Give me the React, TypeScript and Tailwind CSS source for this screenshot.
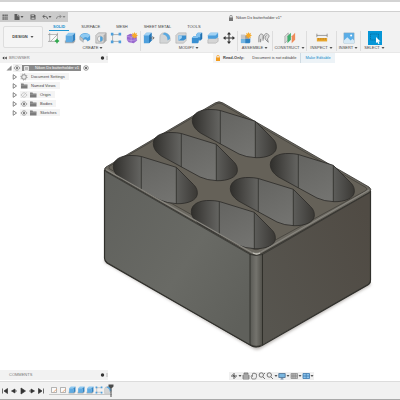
import React, { useState } from 'react';

const tabs = ['SOLID', 'SURFACE', 'MESH', 'SHEET METAL', 'TOOLS'];

const treeItems = [
  { name: 'Document Settings', icon: 'gear', eye: '' },
  { name: 'Named Views', icon: 'folder', eye: '' },
  { name: 'Origin', icon: 'folder', eye: 'off' },
  { name: 'Bodies', icon: 'folder', eye: 'on' },
  { name: 'Sketches', icon: 'folder', eye: 'on' },
];

const groups = [
  { name: 'CREATE', width: 'w-[95px]', icons: ['sketch', 'extrude', 'revolve', 'hole', 'pattern', 'form'] },
  { name: 'MODIFY', width: 'w-[97px]', icons: ['press', 'fillet', 'shell', 'combine', 'split', 'move'] },
  { name: 'ASSEMBLE', width: 'w-[35px]', icons: ['component', 'joint'] },
  { name: 'CONSTRUCT', width: 'w-[34px]', icons: ['plane'] },
  { name: 'INSPECT', width: 'w-[30px]', icons: ['measure'] },
  { name: 'INSERT', width: 'w-[24px]', icons: ['image'] },
  { name: 'SELECT', width: 'w-[27px]', icons: ['select'] },
];

// every tool drawing uses a 14 x 14 box
const toolDrawings: Record<string, React.ReactNode> = {
  sketch: (
    <>
      <path d="M2 3h9v8H2z" fill="#fafafa" stroke="#777" strokeWidth=".6" />
      <path d="M3 11 11 3M2 1v2M11 1v2M0 3h2M0 11h2" stroke="#777" strokeWidth=".6" />
      <path d="M10.5 8v5M8 10.5h5" stroke="#27a745" strokeWidth="1.7" />
    </>
  ),
  extrude: (
    <>
      <path d="M1 10h10l2-2v3l-2 2H1z" fill="#aaa" />
      <path d="M2 4 5 1h8l-3 3z" fill="#8fcaf2" />
      <path d="M2 4h8v8H2z" fill="#5fabe2" />
      <path d="m10 4 3-3v8l-3 3z" fill="#2f83c3" />
    </>
  ),
  revolve: (
    <>
      <path d="M1 5c2-5 10-5 12-1v5l-3 2C9 8 6 8 5 10L1 8z" fill="#4d9fdc" />
      <path d="M1 5c3-4 9-4 12-1l-3 3C8 5 6 6 5 8z" fill="#8fcaf2" />
      <path d="m1 5 4 3v4l-4-3z" fill="#c2c4c5" stroke="#888" strokeWidth=".4" />
    </>
  ),
  hole: (
    <>
      <path d="m1 4 3-3h9v9l-3 3H1z" fill="#d8d8d8" stroke="#8a8a8a" strokeWidth=".6" />
      <path d="m10 4 3-3v9l-3 3z" fill="#aaa" />
      <circle cx="6" cy="8" r="3.2" fill="#eee" stroke="#777" strokeWidth=".5" />
      <path d="M6 5a3 3 0 0 1 0 6z" fill="#4da3dd" />
    </>
  ),
  pattern: (
    <>
      <path d="M3 3h8M3 3v8M3 11h8" stroke="#8b8b8b" strokeWidth=".7" />
      <path d="M1 1h3v3H1zM10 1h3v3h-3zM1 10h3v3H1zM10 10h3v3h-3z" fill="#4d9fdc" />
    </>
  ),
  form: (
    <>
      <path d="m1 4 4-2 7 2 1 6-4 3-6-1-2-3z" fill="#9969cf" />
      <path d="m1 5 5 1 6-2M6 6v7M1 9l5 1 7-1" stroke="#d1b5f0" strokeWidth=".6" fill="none" />
      <path d="m10 0 1 2 2-1-1 2 2 1-2 1 1 2-2-1-1 2-1-2-2 1 1-2-2-1 2-1-1-2 2 1z" fill="#f7a928" />
    </>
  ),
  press: (
    <>
      <path d="m1 4 3-3h6v9l-3 3H1z" fill="#4d9fdc" />
      <path d="m1 4 3-3h6L7 4z" fill="#9fd1f3" />
      <path d="m7 4 3-3v9l-3 3z" fill="#2776b5" />
      <path d="M8 7h5m-2-2 2 2-2 2" stroke="#555" strokeWidth=".8" fill="none" />
    </>
  ),
  fillet: (
    <>
      <path d="M1 6c0-3 2-5 5-5 4 0 7 3 7 7v2l-3 3H1z" fill="#d3d5d6" stroke="#999" strokeWidth=".5" />
      <path d="M4 3c4 0 6 3 6 7l3-2c0-4-3-7-7-7z" fill="#5ba9e0" />
    </>
  ),
  shell: (
    <>
      <path d="m1 4 3-3h9v9l-3 3H1z" fill="#d6d6d6" stroke="#999" strokeWidth=".5" />
      <path d="M4 4h9v4l-3 2H4z" fill="#3b90d0" />
      <path d="M4 4h4v3L4 10z" fill="#a3d3f4" />
    </>
  ),
  combine: (
    <>
      <path d="m1 7 2-2h3V3l2-2h5v7l-2 2H9v2l-1 1H1z" fill="#388fd1" />
      <path d="m1 7 2-2h3V3l2-2h5l-2 2v3H8v1z" fill="#83c2ef" />
      <path d="m11 3 2-2v7l-2 2z" fill="#2370ae" />
    </>
  ),
  split: (
    <>
      <path d="m1 9 3-2h9v4l-3 2H1z" fill="#d5d5d5" stroke="#999" strokeWidth=".5" />
      <path d="m1 4 3-3h9v5l-3 2H1z" fill="#4d9fdc" />
      <path d="m1 4 3-3h9l-3 3z" fill="#a3d3f4" />
    </>
  ),
  move: (
    <>
      <path d="M7 2v10M2 7h10" stroke="#333" strokeWidth="1.2" />
      <path d="m7 0 2.4 3H4.6zM7 14l2.4-3H4.6zM0 7l3-2.4v4.8zM14 7l-3-2.4v4.8z" fill="#333" />
    </>
  ),
  component: (
    <>
      <path d="M1 3h5v5H1z" fill="#c8c8c8" />
      <path d="M1 8h5v5H1z" fill="#74b6e4" />
      <path d="M6 8h5l1-1v5l-1 1H6z" fill="#2f83c3" />
      <path d="M6 4h5v4H6z" fill="#999" />
      <path d="m10 0 1 2 2-1-1 2 2 1-2 1 1 2-2-1-1 2-1-2-2 1 1-2-2-1 2-1-1-2 2 1z" fill="#f7a928" />
    </>
  ),
  joint: (
    <path d="M1 12V7c0-5 4-6 5-3v6M6 8c0-5 4-8 6-5 2 2 0 4-1 5l1 4-3-3c-1-1-1-4 1-5M3 12V8" fill="#ddd" stroke="#858585" strokeWidth="1" />
  ),
  plane: (
    <>
      <path d="m1 5 4-4v8l-4 4z" fill="#d9d9d9" stroke="#777" strokeWidth=".5" />
      <path d="m4 5 4-4v8l-4 4z" fill="#3fae6e" />
      <path d="m9 5 4-4v8l-4 4z" fill="#ee8b59" />
    </>
  ),
  measure: (
    <>
      <path d="M1 2v4M13 2v4M1 4h12" stroke="#666" strokeWidth=".7" />
      <path d="M1 7h12v4H1z" fill="#e8a52c" />
      <path d="M3 7v2M5 7v2M7 7v2M9 7v2M11 7v2" stroke="#9d6a10" strokeWidth=".5" />
    </>
  ),
  image: (
    <>
      <path d="M1 1h12v12H1z" fill="#5aaee8" stroke="#92a5b4" strokeWidth=".5" />
      <circle cx="9.5" cy="4" r="1.2" fill="#fff" />
      <path d="m1 10 4-4 4 4 2-2 2 2v3H1z" fill="#d5e9f6" />
    </>
  ),
  select: (
    <>
      <path d="M0 0h14v14H0z" fill="#0696d7" />
      <path d="M2.5 3h8v6h-8z" fill="none" stroke="#075c87" strokeWidth=".6" strokeDasharray="1.2 .7" />
      <path d="m8 6 4.5 4.5h-2l1 2-1.2.5-1-2L8 12z" fill="#fff" />
    </>
  ),
};

const holes = [
  { x: 79, y: -46 },
  { x: 40, y: -23 },
  { x: 0, y: 0 },
  { x: 157, y: -2 },
  { x: 117, y: 22 },
  { x: 78, y: 45 },
];

const holeOutline =
  'M113.3 166.5C113.3 159 122 155 132 155.500Q137 155.500 141.300 156.500L176.300 167.300L193.500 184.500C197 188 197.500 191 197.300 194C197 200 188 204 177 203.700Q167 203.300 160 200L122 179.300C116 175.500 113.300 171 113.300 166.500Z';

function Caret() {
  return (
    <svg viewBox="0 0 4 4" className="h-1 w-1 shrink-0" aria-hidden="true">
      <path d="M.5 1h3L2 3z" fill="#555" />
    </svg>
  );
}

function Eye({ off }: { off?: boolean }) {
  return (
    <svg viewBox="0 0 8 6" className="h-1.5 w-2 shrink-0" aria-hidden="true" opacity={off ? 0.45 : 0.8}>
      <path d="M1 3c2-3 4-3 6 0-2 3-4 3-6 0z" fill="#eee" stroke="#777" strokeWidth=".8" />
      <circle cx="4" cy="3" r="1.2" fill={off ? '#eee' : '#666'} />
      {off && <path d="M1.5 5.5 6.5.5" stroke="#777" strokeWidth=".6" />}
    </svg>
  );
}

function Folder() {
  return (
    <svg viewBox="0 0 8 6" className="h-1.5 w-2 shrink-0" aria-hidden="true">
      <path d="M1 .5h2.5l.5 1h3.5v4H1z" fill="#7c7c7c" />
      <path d="M1 2.2h6.5" stroke="#c4c4c4" strokeWidth=".4" />
    </svg>
  );
}

function Gear() {
  return (
    <svg viewBox="0 0 8 8" className="h-2 w-2 shrink-0" aria-hidden="true">
      <circle cx="4" cy="4" r="2.3" fill="#eee" stroke="#777" strokeWidth=".8" />
      <circle cx="4" cy="4" r="3.1" fill="none" stroke="#888" strokeWidth=".8" strokeDasharray="1 1.4" />
    </svg>
  );
}

function PanelEnd() {
  return (
    <svg viewBox="0 0 8 6" className="h-1.5 w-2 shrink-0" aria-hidden="true">
      <circle cx="2.5" cy="3" r="1.7" fill="#333" />
      <path d="M7 1v4" stroke="#aaa" strokeWidth=".8" />
    </svg>
  );
}

function QuickBar() {
  return (
    <div className="flex h-2.5 w-[68px] items-center bg-[#cbcbcb] text-[#5c5c5c]">
      <button aria-label="Data panel" className="ml-0.5 h-1.5 w-1.5">
        <svg viewBox="0 0 6 6">
          <path d="M.5.5h1.4v1.4H.5zM2.4.5h1.4v1.4H2.4zM4.3.5h1.4v1.4H4.3zM.5 2.4h1.4v1.4H.5zM2.4 2.4h1.4v1.4H2.4zM4.3 2.4h1.4v1.4H4.3zM.5 4.3h1.4v1.4H.5zM2.4 4.3h1.4v1.4H2.4zM4.3 4.3h1.4v1.4H4.3z" fill="currentColor" />
        </svg>
      </button>
      <button aria-label="File" className="ml-1.5 flex items-center">
        <svg viewBox="0 0 6 6" className="h-1.5 w-1.5">
          <path d="M.5 0h3l2 2v4h-5z" fill="currentColor" />
          <path d="M3.5 0v2h2" stroke="#ddd" strokeWidth=".5" fill="none" />
        </svg>
        <Caret />
      </button>
      <button aria-label="Save" className="ml-1.5 h-1.5 w-1.5">
        <svg viewBox="0 0 6 6">
          <path d="M.5.5h4l1 1v4h-5z" fill="currentColor" />
          <path d="M1.5 1h2.5v1.3H1.500zM1.500 3.500h3v1.500h-3z" fill="#bbb" />
        </svg>
      </button>
      <button aria-label="Undo" className="ml-1.5 flex items-center">
        <svg viewBox="0 0 6 6" className="h-1.5 w-1.5">
          <path d="M2.5.8.8 2.5l1.7 1.7M1 2.5h2.5Q5.5 2.5 5.5 5" stroke="currentColor" strokeWidth=".9" fill="none" />
        </svg>
        <Caret />
      </button>
      <button aria-label="Redo" className="ml-1 flex items-center opacity-60">
        <svg viewBox="0 0 6 6" className="h-1.5 w-1.5">
          <path d="M3.5.8l1.7 1.7-1.7 1.7M5 2.5H2.5Q.5 2.5.5 5" stroke="currentColor" strokeWidth=".9" fill="none" />
        </svg>
        <Caret />
      </button>
    </div>
  );
}

function Ribbon() {
  const [active, setActive] = useState('SOLID');

  return (
    <div className="flex pb-px">
      <button className="mt-1 ml-[3px] flex h-[22px] w-10 shrink-0 items-center justify-center gap-0.5 rounded-[2px] border border-[#dedede] bg-[#f5f5f5] font-semibold">
        DESIGN <Caret />
      </button>
      <div className="ml-[3px] flex flex-col">
        <div className="ml-[3px] flex gap-2">
          {tabs.map((tab) => (
            <button
              key={tab}
              onClick={() => setActive(tab)}
              className={
                tab === active
                  ? 'h-[9px] border-b border-[#2196d3] px-1 pt-px font-bold text-[#168fd0]'
                  : 'h-[9px] border-b border-transparent px-1 pt-px'
              }
            >
              {tab}
            </button>
          ))}
        </div>
        <div className="flex">
          {groups.map((group) => (
            <div
              key={group.name}
              className={`${group.width} flex shrink-0 flex-col items-center border-r border-[#dddddd] last:border-r-0`}
            >
              <div
                className={
                  group.icons.length > 1
                    ? 'flex h-[14px] w-full justify-between px-px'
                    : 'flex h-[14px] w-full justify-center'
                }
              >
                {group.icons.map((icon) => (
                  <button key={icon} aria-label={icon} className="h-[14px] w-[14px]">
                    <svg viewBox="0 0 14 14" fill="none" className={icon === 'select' ? 'h-full w-full' : 'h-full w-full p-px'}>
                      {toolDrawings[icon]}
                    </svg>
                  </button>
                ))}
              </div>
              <button className="flex items-center gap-px whitespace-nowrap">
                {group.name}
                <Caret />
              </button>
            </div>
          ))}
        </div>
      </div>
    </div>
  );
}

function Browser() {
  return (
    <aside className="absolute top-0 left-0 w-[108px]">
      <div className="flex h-[10px] items-center bg-[#f2f2f2] pl-0.5 text-[#777]">
        <svg viewBox="0 0 5 4" className="h-1 w-[5px]" aria-hidden="true">
          <path d="M2.3.5v3L.3 2zM4.7.5v3l-2-1.5z" fill="#333" />
        </svg>
        <span className="ml-0.5 grow">BROWSER</span>
        <PanelEnd />
      </div>
      <div className="mt-px flex h-2 items-center pl-1.5">
        <svg viewBox="0 0 6 6" className="h-1.5 w-1.5" aria-hidden="true">
          <path d="M5.5.5v5h-5z" fill="#777" />
          <path d="M2 3v3M3.8 1.5V6" stroke="#eee" strokeWidth=".4" />
        </svg>
        <span className="ml-px flex h-2 items-center bg-[#f2f2f2] pr-px">
          <Eye />
        </span>
        <span className="flex h-1.5 items-center gap-1.5 bg-[#8a8a8a] pr-0.5 pl-0.5 whitespace-nowrap text-white">
          <svg viewBox="0 0 5 5" className="h-[5px] w-[5px]" aria-hidden="true">
            <path d="M.5.5h4v4h-4z" fill="#bbb" stroke="#fff" strokeWidth=".7" />
          </svg>
          Nikon Dx batterholder v1
        </span>
        <svg viewBox="0 0 6 6" className="ml-0.5 h-1.5 w-1.5 shrink-0" aria-hidden="true">
          <circle cx="3" cy="3" r="2.3" fill="#fff" stroke="#555" strokeWidth=".6" />
          <circle cx="3" cy="3" r="1" fill="#444" />
        </svg>
      </div>
      <ul className="pl-3">
        {treeItems.map((item) => (
          <li key={item.name} className="flex h-[9px] items-center">
            <svg viewBox="0 0 6 6" className="h-1.5 w-1.5" aria-hidden="true">
              <path d="M1.2.7v4.6L4.5 3z" fill="#fff" stroke="#555" strokeWidth=".7" />
            </svg>
            <span className="ml-0.5 flex h-[7px] items-center gap-px bg-[#f4f4f4] pr-1">
              {item.eye && <Eye off={item.eye === 'off'} />}
              {item.icon === 'gear' ? <Gear /> : <Folder />}
              <span className="ml-0.5 whitespace-nowrap">{item.name}</span>
            </span>
          </li>
        ))}
      </ul>
    </aside>
  );
}

function Model() {
  return (
    <svg viewBox="0 53 400 328" className="block w-full" role="img" aria-label="Battery holder model">
      <defs>
        <linearGradient id="front" x1="0" y1="0" x2="1" y2=".8">
          <stop offset="0" stopColor="#5f605c" />
          <stop offset=".6" stopColor="#696a65" />
          <stop offset="1" stopColor="#5f605b" />
        </linearGradient>
        <linearGradient id="side" x1="0" y1=".8" x2="1" y2=".2">
          <stop offset="0" stopColor="#57554f" />
          <stop offset="1" stopColor="#504b44" />
        </linearGradient>
        <linearGradient id="edge">
          <stop offset="0" stopColor="#595954" />
          <stop offset=".5" stopColor="#74736d" />
          <stop offset="1" stopColor="#504f49" />
        </linearGradient>
        <linearGradient id="wallLeft">
          <stop offset="0" stopColor="#2e2d2a" />
          <stop offset=".5" stopColor="#4b4a47" />
          <stop offset="1" stopColor="#666663" />
        </linearGradient>
        <linearGradient id="wallMid" x1="0" y1="0" x2=".3" y2="1">
          <stop offset="0" stopColor="#62625f" />
          <stop offset="1" stopColor="#737370" />
        </linearGradient>
        <linearGradient id="wallRight">
          <stop offset="0" stopColor="#5d5d5a" />
          <stop offset=".5" stopColor="#4a4946" />
          <stop offset="1" stopColor="#373531" />
        </linearGradient>
        <clipPath id="holeClip">
          <path d={holeOutline} />
        </clipPath>
        <filter id="soft" x="-10%" y="-10%" width="120%" height="120%">
          <feGaussianBlur stdDeviation="1.5" />
        </filter>
      </defs>
      <path d="M104 262 254 349q3 1 6 0L371 285l-5-8-108 60L108 252z" fill="#b9b5b2" filter="url(#soft)" />
      <path d="M104.500 169 219 103l152 88v89q0 3-2 4.500L262 345q-5 4-11 1L107 263q-2.500-2-2.500-5z" fill="#45433d" />
      <path d="M104.500 170 250 254v91L107 262q-2.500-2-2.500-5z" fill="url(#front)" />
      <path d="M262.500 254 370.500 192v88q0 2-2 3.500l-106 61z" fill="url(#side)" />
      <path d="M250 252h12.500v92q-6 3.500-12.500 0z" fill="url(#edge)" />
      <path d="M106 167 215 103q4-2.500 8 0l146 84q3 2 1 5l-109 62q-5 2.500-10 0L106 171q-3-2 0-4z" fill="#6b6860" stroke="#33322e" strokeWidth=".8" />
      <path d="M109 166.500 216 104q3-1.500 6 0l144 83.500q2 1.500 0 3L259 249q-3 1.500-6 0L109 168.500z" fill="#656158" stroke="#36342f" strokeWidth=".6" />
      {holes.map((hole) => (
        <g key={`${hole.x}-${hole.y}`} transform={`translate(${hole.x} ${hole.y})`}>
          <g clipPath="url(#holeClip)">
            <path d="M112 150h30v60h-30z" fill="url(#wallLeft)" />
            <path d="M141.300 150h35v60h-35z" fill="url(#wallMid)" />
            <path d="M176.300 150h23v60h-23z" fill="url(#wallRight)" />
            <path d="M141.300 155v36M176.300 167v38" stroke="#262622" strokeWidth=".7" />
          </g>
          <path d={holeOutline} fill="none" stroke="#2b2a27" strokeWidth=".8" />
        </g>
      ))}
      <path d="M106 169.500 251 252q5 2.500 10 0l108-62" fill="none" stroke="#898780" strokeWidth="1.1" />
      <path d="M105.500 171.500 250 254.500q6 2 12.500 0L370 192.500" fill="none" stroke="#31302c" strokeWidth=".7" />
      <path d="M253 253q4 2 7 0" stroke="#c5c3bb" strokeWidth="1.3" fill="none" />
      <path d="M250 254v91M262.500 254v91" stroke="#282823" strokeWidth=".8" />
      <path d="M104.500 170v88q0 3 2.500 5l144 82.500q5 3 11 0l106.500-61q2-1.500 2-4.500v-89" fill="none" stroke="#30302c" strokeWidth="1.2" />
    </svg>
  );
}

function DocumentBar() {
  return (
    <div className="absolute top-0 left-[213px] flex h-[10px] items-center bg-[#f4f4f4] whitespace-nowrap">
      <svg viewBox="0 0 6 6" className="ml-0.5 h-1.5 w-1.5" aria-hidden="true">
        <path d="M1 2.5h4V6H1z" fill="#f39c1f" />
        <path d="M1.8 3V1.5a1.2 1.2 0 0 1 2.4 0V3" fill="none" stroke="#f39c1f" strokeWidth=".7" />
      </svg>
      <span className="ml-0.5 font-bold">Read-Only:</span>
      <span className="ml-2">Document is not editable</span>
      <button className="ml-1 h-full border-l border-[#cfdbe3] bg-[#edf3f7] px-1 text-[#168bc9]">Make Editable</button>
    </div>
  );
}

const navTools = [
  { name: 'Orbit', caret: true, drawing: <path d="M4 1v6M1 4h6M2.5 2.5l3 3" stroke="#555" /> },
  { name: 'Look at', caret: false, drawing: <path d="M1 3h6v4H1zM2 1h4v1H2zM1 5h6" stroke="#666" fill="#ccc" strokeWidth=".7" /> },
  { name: 'Pan', caret: false, drawing: <path d="M2 7 1 4l1-.5.5 1v-3h1V1h1v.5h1V2h1v3L5.500 7z" stroke="#555" fill="#eee" strokeWidth=".6" /> },
  { name: 'Zoom', caret: false, drawing: <path d="M5 5l2 2M5.5 3a2.200 2.200 0 1 1-4.400 0 2.200 2.200 0 0 1 4.400 0M6 1l1 1" stroke="#555" strokeWidth=".8" /> },
  { name: 'Fit', caret: true, drawing: <path d="M5 5l2 2M5.5 3a2.200 2.200 0 1 1-4.400 0 2.200 2.200 0 0 1 4.400 0" stroke="#555" strokeWidth=".8" /> },
  { name: 'Display', caret: true, drawing: <path d="M.8 1.500h6.400v4H.8zM4 5.500V7M2.500 7h3" stroke="#4b7092" fill="#79b6df" strokeWidth=".8" /> },
  { name: 'Grid', caret: true, drawing: <path d="M1 1.500h6.500v5H1zM1 3.200h6.500M1 4.800h6.500M3 1.500v5M5.200 1.500v5" stroke="#777" fill="#ccc" strokeWidth=".6" /> },
  { name: 'Viewports', caret: true, drawing: <path d="M1 1.500h6.500v5H1zM1 4h6.500M4.200 1.500v5" stroke="#3d79ae" fill="#8ec5ec" strokeWidth=".8" /> },
];

function NavBar() {
  return (
    <div className="absolute bottom-px left-[229px] flex h-2 items-center bg-[#f0f0f0] pl-px">
      {navTools.map((tool) => (
        <button key={tool.name} aria-label={tool.name} className="flex items-center">
          <svg viewBox="0 0 8 8" className="h-2 w-2" fill="none">
            {tool.drawing}
          </svg>
          {tool.caret && <Caret />}
        </button>
      ))}
    </div>
  );
}

const playback = [
  { name: 'Start', path: 'M1.5 1.5v5M6.5 1.5v5L3 4z' },
  { name: 'Step back', path: 'M5 2v4L1.5 4zM4 4h3' },
  { name: 'Play', path: 'M2 1v6l4.500-3z' },
  { name: 'Step forward', path: 'M3 2v4l3.500-2zM1 4h3' },
  { name: 'End', path: 'M6.500 1.500v5M1.500 1.500v5L5 4z' },
];

const features = ['sketch', 'sketch', 'extrude', 'extrude', 'extrude', 'pattern', 'fillet'];

function Timeline() {
  return (
    <footer className="flex h-[19px] items-center border-t border-b border-t-[#dcdcdc] border-b-[#a8a8a8] bg-[#f1f1f1] pl-px">
      <div className="flex gap-px">
        {playback.map((item) => (
          <button key={item.name} aria-label={item.name} className="h-2 w-2">
            <svg viewBox="0 0 8 8">
              <path d={item.path} fill="#333" stroke="#333" strokeWidth=".7" />
            </svg>
          </button>
        ))}
      </div>
      <div className="ml-1 flex border-b border-[#c7c7c7]">
        {features.map((feature, index) => (
          <button key={index} aria-label={`${feature} ${index + 1}`} className="flex h-2 w-[9px] justify-center">
            {feature === 'sketch' ? (
              <svg viewBox="0 0 8 8" className="h-2 w-2">
                <path d="M1.5 1.5h5v5h-5z" fill="#fafafa" stroke="#888" strokeWidth=".6" />
                <path d="m3.5 6 3.5-3" stroke="#eba16b" strokeWidth=".8" />
              </svg>
            ) : (
              <svg viewBox="0 0 14 14" fill="none" className="h-2 w-2">
                {toolDrawings[feature]}
              </svg>
            )}
          </button>
        ))}
      </div>
      <svg viewBox="0 0 6 13" className="-ml-1 h-[13px] w-1.5" aria-hidden="true">
        <path d="M.5.5h5v2l-2 2V13h-1V4.500l-2-2z" fill="#4c4c4c" />
      </svg>
    </footer>
  );
}

export default function App() {
  return (
    <div className="flex min-h-screen flex-col bg-white font-['Liberation_Sans',Arial,sans-serif] text-[4px] leading-[6px] text-[#444]">
      <div className="h-3 border-t-2 border-b border-t-[#d3d3d3] border-b-[#d0d0d0] bg-white" />
      <header className="border-b border-[#e8e8e8] bg-[#f2f2f2]">
        <div className="flex items-center">
          <QuickBar />
          <div className="ml-[160px] flex items-center gap-0.5 pt-0.5 whitespace-nowrap">
            <svg viewBox="0 0 6 6" className="h-1.5 w-1.5" aria-hidden="true">
              <path d="M1 2.5h4V6H1z" fill="#777" />
              <path d="M1.8 3V1.5a1.2 1.2 0 0 1 2.4 0V3" fill="none" stroke="#777" strokeWidth=".7" />
            </svg>
            <h1>Nikon Dx batterholder v1*</h1>
          </div>
        </div>
        <Ribbon />
      </header>
      <main className="relative grow">
        <Model />
        <Browser />
        <DocumentBar />
        <div className="absolute bottom-px left-0 flex h-[10px] w-[108px] items-center bg-[#f2f2f2] pl-[9px] text-[#777]">
          <span className="grow">COMMENTS</span>
          <PanelEnd />
        </div>
        <NavBar />
      </main>
      <Timeline />
    </div>
  );
}
